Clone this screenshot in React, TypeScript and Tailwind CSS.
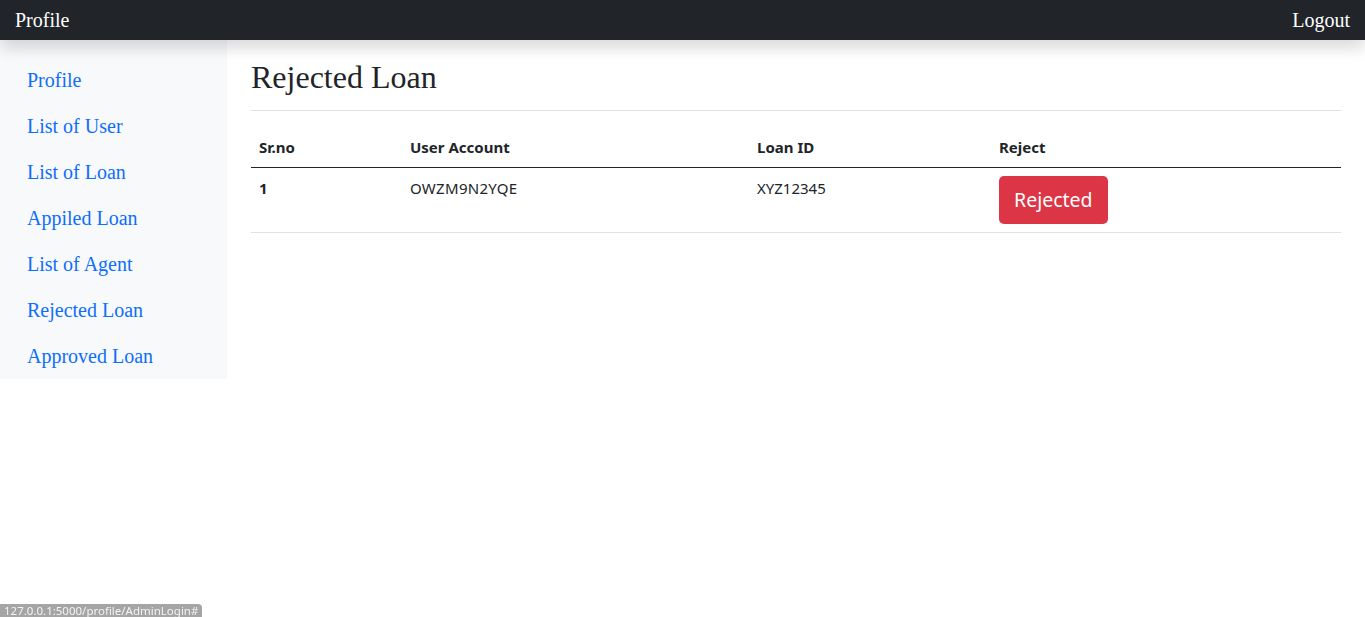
const links = ["Profile", "List of User", "List of Loan", "Appiled Loan", "List of Agent", "Rejected Loan", "Approved Loan"];

const App = () => {
    return (
        <div className="min-h-[617px] bg-white font-['Liberation_Serif',serif]">
            <div className="relative z-10 flex h-10 items-center justify-between bg-[#212529] px-[15px] text-[20px] text-white shadow-[0_8px_16px_rgba(0,0,0,0.15)]">
                <span>Profile</span>
                <span>Logout</span>
            </div>
            <div className="flex items-start">
                <div className="w-[227px] bg-[#f8f9fa] pt-[17px]">
                    {links.map((l) => (
                        <div key={l} className="px-[27px] py-[11px] text-[20px] leading-6 text-[#0d6efd]">
                            {l}
                        </div>
                    ))}
                </div>
                <div className="flex-1 pl-6 pr-6 pt-[18px]">
                    <h2 className="text-[32px] leading-[38px] text-[#212529]">Rejected Loan</h2>
                    <hr className="mt-[14px] border-t border-[#dee2e6]" />
                    <table className="mt-4 w-full border-collapse font-['Noto_Sans','Open_Sans',sans-serif] text-[15px] leading-6 text-[#212529]">
                        <thead>
                            <tr className="border-b border-[#212529] text-left">
                                <th className="w-[151px] p-2 font-bold">Sr.no</th>
                                <th className="w-[347px] p-2 font-bold">User Account</th>
                                <th className="w-[242px] p-2 font-bold">Loan ID</th>
                                <th className="p-2 font-bold">Reject</th>
                            </tr>
                        </thead>
                        <tbody>
                            <tr className="border-b border-[#dee2e6] align-top">
                                <td className="p-2 font-bold">1</td>
                                <td className="p-2 tracking-[0.3px]">OWZM9N2YQE</td>
                                <td className="p-2">XYZ12345</td>
                                <td className="p-2">
                                    <button className="h-12 rounded-[5px] bg-[#dc3545] px-[15px] text-[19.5px] text-white">Rejected</button>
                                </td>
                            </tr>
                        </tbody>
                    </table>
                </div>
            </div>
            <div className="fixed bottom-0 left-0 rounded-tr-[4px] bg-[#a5a5a5] px-1 font-['Noto_Sans',sans-serif] text-[11.5px] leading-[13px] text-[#f4f4f4]">
                127.0.0.1:5000/profile/AdminLogin#
            </div>
        </div>
    );
};

export default App;
